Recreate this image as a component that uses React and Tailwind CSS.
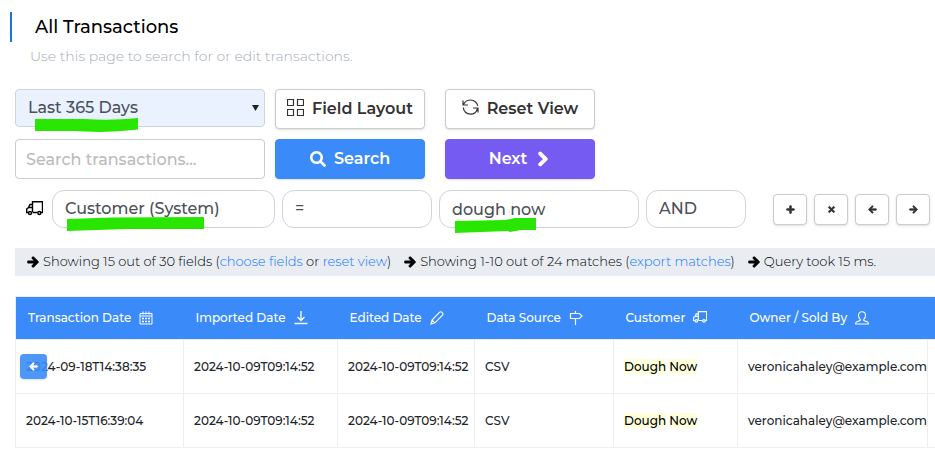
import React from "react";
import {
  FaSearch,
  FaChevronRight,
  FaPlus,
  FaTimes,
  FaArrowLeft,
  FaArrowRight,
} from "react-icons/fa";

function LineIcon({ className, box = 14, strokeWidth = 1, children }) {
  return (
    <svg
      className={`shrink-0 ${className}`}
      viewBox={`0 0 ${box} ${box}`}
      fill="none"
      stroke="currentColor"
      strokeWidth={strokeWidth}
      aria-hidden="true"
    >
      {children}
    </svg>
  );
}

function GridIcon({ className }) {
  return (
    <LineIcon className={className} box={17}>
      <path d="M.5.5h6v6h-6zM10.500.5h6v6h-6zM.5 10.500h6v6h-6zM10.500 10.500h6v6h-6z" strokeWidth="1.2" />
    </LineIcon>
  );
}

function ReloadIcon({ className }) {
  return (
    <LineIcon className={className} box={17} strokeWidth={1.2}>
      <path d="M1 1.500v4.500h5M1.500 5.500C3 2.500 5.500 1 8.500 1c3.800 0 6.800 2.700 7.300 6" />
      <path d="M11 9h5v4.500M15.500 9.500c-.8 3.300-3.500 5.700-7 5.700-4 0-7-3-7.200-6.700" />
    </LineIcon>
  );
}

function TruckIcon({ className }) {
  return (
    <LineIcon className={className} box={17} strokeWidth={1.4}>
      <path d="M11.500 11.500H6.500M15 11.500h1.500V.8H6.500v10.200M6.500 3.500H4L2.500 6.500.7 8v3.500h1.500M6.500 6.500h-4" />
      <circle cx="4" cy="12" r="1.500" />
      <circle cx="13.300" cy="12" r="1.500" />
    </LineIcon>
  );
}

function CalendarIcon({ className }) {
  return (
    <LineIcon className={className}>
      <path d="M1 2.500h12v10.500H1zM1 5h12M4 .5v3M7 .5v3M10 .5v3" />
      <path d="M3 7.500h2M6 7.500h2M9 7.500h2M3 10.500h2M6 10.500h2M9 10.500h2" strokeWidth="1.500" />
    </LineIcon>
  );
}

function DownloadIcon({ className }) {
  return (
    <LineIcon className={className} strokeWidth={1.3}>
      <path d="M7 0v9.500M3.500 6L7 9.500 10.500 6M.5 12.500h13" />
    </LineIcon>
  );
}

function PencilIcon({ className }) {
  return (
    <LineIcon className={className} strokeWidth={1.1}>
      <path d="M1 13l1-4 7.500-7.700c1.500-1.500 4.300.8 3 2.800L5 11.800zM2 9l3 2.800" />
    </LineIcon>
  );
}

function SignpostIcon({ className }) {
  return (
    <LineIcon className={className} strokeWidth={1.2}>
      <path d="M6.500 0v2.500M6.500 7.500V14M1.500 2.500h9L13 5l-2.500 2.500h-9z" />
    </LineIcon>
  );
}

function UserIcon({ className }) {
  return (
    <LineIcon className={className} strokeWidth={1.1}>
      <path d="M7 .8c2.200 0 3.500 1.500 3.500 3.700 0 1.700-.8 3-1.700 3.800v1.200l3.400 1.200c.8.300 1.200.9 1.200 2.300H.6c0-1.400.4-2 1.200-2.300l3.400-1.200V8.300C4.300 7.500 3.500 6.200 3.500 4.500 3.500 2.300 4.800.8 7 .8z" />
    </LineIcon>
  );
}

const COLUMNS = [
  { label: "Transaction Date", Icon: CalendarIcon, width: "w-[168px]" },
  { label: "Imported Date", Icon: DownloadIcon, width: "w-[154px]" },
  { label: "Edited Date", Icon: PencilIcon, width: "w-[137px]" },
  { label: "Data Source", Icon: SignpostIcon, width: "w-[139px]" },
  { label: "Customer", Icon: TruckIcon, width: "w-[124px]" },
  { label: "Owner / Sold By", Icon: UserIcon, width: "w-[190px]" },
];

const ROWS = [
  ["2024-09-18T14:38:35", "2024-10-09T09:14:52", "2024-10-09T09:14:52", "CSV", ["Dough", "Now"], "veronicahaley@example.com"],
  ["2024-10-15T16:39:04", "2024-10-09T09:14:52", "2024-10-09T09:14:52", "CSV", ["Dough", "Now"], "veronicahaley@example.com"],
];

const PILL =
  "block w-full h-[38px] appearance-none rounded-xl border border-[#ced4da] bg-white px-3 text-[16px] font-medium text-[#495057] outline-none";
const BUTTON =
  "flex h-10 w-[150px] items-center justify-center gap-2 rounded border text-[16px] font-semibold shadow-sm";
const HEAVY = "stroke-current [stroke-width:45]";

function Marker({ className, d, viewBox }) {
  return (
    <svg className={`pointer-events-none absolute ${className}`} viewBox={viewBox} aria-hidden="true">
      <path d={d} fill="#28e600" />
    </svg>
  );
}

function Toolbar() {
  return (
    <div className="mt-[23px] flex flex-col gap-[10px]">
      <div className="flex items-start">
        <div className="relative mr-[10px] w-[250px]">
          <select
            aria-label="Date range"
            className="block h-[38px] w-full appearance-none rounded border border-[#ced4da] bg-[#eaf2ff] px-3 text-[16px] font-medium text-[#495057] outline-none"
          >
            <option>Last 365 Days</option>
          </select>
          <svg className="pointer-events-none absolute top-4 right-[6px] h-[6px] w-[7px]" viewBox="0 0 7 6" aria-hidden="true">
            <path d="M0 0h7L3.5 6z" fill="#222" />
          </svg>
          <Marker
            className="top-[29px] left-5 h-[15px] w-[103px]"
            viewBox="0 0 103 15"
            d="M0 1H50Q76 3 103 0V11.500Q76 15 50 13.500L38 13H0Z"
          />
        </div>
        <button type="button" className={`${BUTTON} mr-5 border-[#ccc] bg-white text-[#333]`}>
          <GridIcon className="mb-[3px] size-[17px]" />
          Field Layout
        </button>
        <button type="button" className={`${BUTTON} border-[#ccc] bg-white text-[#333]`}>
          <ReloadIcon className="mb-[3px] size-[17px]" />
          Reset View
        </button>
      </div>
      <div className="flex items-start">
        <input
          type="text"
          aria-label="Search transactions"
          placeholder="Search transactions..."
          className="mr-[10px] block h-10 w-[250px] rounded border border-[#ccc] bg-white px-[10px] text-[16px] font-medium text-[#495057] outline-none placeholder:text-[#bbb]"
        />
        <button type="button" className={`${BUTTON} mr-5 border-[#3a8bf9] bg-[#3a8bf9] text-white`}>
          <FaSearch className="size-4" />
          Search
        </button>
        <button type="button" className={`${BUTTON} border-[#755bf2] bg-[#755bf2] text-white`}>
          Next
          <FaChevronRight className={`size-4 ${HEAVY}`} />
        </button>
      </div>
    </div>
  );
}

const ACTIONS = [
  { label: "Add condition", Icon: FaPlus },
  { label: "Remove condition", Icon: FaTimes },
  { label: "Move left", Icon: FaArrowLeft },
  { label: "Move right", Icon: FaArrowRight },
];

function Filter() {
  return (
    <div className="mt-[11px] flex items-center">
      <TruckIcon className="mr-[9px] ml-[11px] size-[17px] text-black" />
      <div className="relative mr-[7px] w-[223px] shrink-0">
        <select aria-label="Filter field" className={PILL}>
          <option>Customer (System)</option>
        </select>
        <Marker
          className="top-[27px] left-[15px] h-[14px] w-[137px]"
          viewBox="0 0 137 14"
          d="M0 2L45 .5L137 0V12H60L0 14Z"
        />
      </div>
      <select aria-label="Operator" className={`${PILL} mr-[7px] max-w-[150px] shrink-0`}>
        <option>=</option>
      </select>
      <div className="relative mr-[7px] w-[200px] shrink-0">
        <input type="text" aria-label="Filter value" defaultValue="dough now" className={PILL} />
        <Marker
          className="top-[28px] left-4 h-[15px] w-[81px]"
          viewBox="0 0 81 15"
          d="M0 3L50 2L60 0H81V12H66L55 14L53 13L0 15Z"
        />
      </div>
      <select aria-label="Connector" className={`${PILL} mr-[27px] max-w-[100px] shrink-0`}>
        <option>AND</option>
      </select>
      <div className="flex shrink-0 gap-[7px]">
        {ACTIONS.map(({ label, Icon }) => (
          <button
            key={label}
            type="button"
            aria-label={label}
            className="flex h-[31px] w-[34px] items-center justify-center rounded border border-[#ccc] bg-white text-[#333] shadow-sm"
          >
            <Icon className={`size-[9px] ${HEAVY}`} />
          </button>
        ))}
      </div>
    </div>
  );
}

function Note({ children }) {
  return (
    <p className="flex items-center gap-1">
      <FaArrowRight className={`size-3 text-black ${HEAVY}`} />
      <span>{children}</span>
    </p>
  );
}

function Summary() {
  return (
    <div className="mt-5 flex h-7 items-center gap-[13px] bg-[#e9ecf1] px-3 text-[13px] font-light whitespace-nowrap text-black">
      <Note>
        Showing 15 out of 30 fields (<a href="#fields" className="text-[#0a78ff]">choose fields</a> or{" "}
        <a href="#reset" className="text-[#0a78ff]">reset view</a>)
      </Note>
      <Note>
        Showing 1-10 out of 24 matches (<a href="#export" className="text-[#0a78ff]">export matches</a>)
      </Note>
      <Note>Query took 15 ms.</Note>
    </div>
  );
}

function Cell({ value }) {
  if (!Array.isArray(value)) return value;
  return value.map((word, i) => (
    <React.Fragment key={word}>
      {i > 0 && " "}
      <mark className="bg-[#ffffdb] text-black">{word}</mark>
    </React.Fragment>
  ));
}

function Results() {
  return (
    <div className="relative mt-5">
      <table className="w-full table-fixed border-collapse text-left text-[12px] font-medium whitespace-nowrap">
        <thead>
          <tr className="h-[43px] border-t border-l border-[#eee] bg-[#3a8bf9] text-white">
            {COLUMNS.map(({ label, Icon, width }) => (
              <th key={label} scope="col" className={`${width} px-3 font-medium`}>
                <span className="flex items-center gap-2">
                  {label}
                  <Icon className="size-[14px]" />
                </span>
              </th>
            ))}
            <td />
          </tr>
        </thead>
        <tbody>
          {ROWS.map((row, r) => (
            <tr key={r} className="h-[54px] text-[#212529]">
              {row.map((value, c) => (
                <td key={c} className="border border-[#eee] px-[10px]">
                  <Cell value={value} />
                </td>
              ))}
              <td className="border-y border-[#eee]" />
            </tr>
          ))}
        </tbody>
      </table>
      <button
        type="button"
        aria-label="Scroll left"
        className="absolute top-[58px] left-[5px] flex h-[25px] w-[27px] items-center justify-center rounded bg-[#3a8bf9]/90 text-white shadow-sm"
      >
        <FaArrowLeft className={`size-[9px] ${HEAVY}`} />
      </button>
    </div>
  );
}

export default function App() {
  return (
    <main className="overflow-hidden bg-white pt-3 pl-[15px] font-['Montserrat','Inter',sans-serif]">
      <header>
        <h1 className="-ml-[5px] flex h-[30px] items-center border-l-2 border-[#1976d2] pl-[23px] text-[18px] font-medium text-black">
          All Transactions
        </h1>
        <p className="mt-1 pl-[15px] text-[14px] leading-5 font-light text-[#a5acb5]">
          Use this page to search for or edit transactions.
        </p>
      </header>
      <Toolbar />
      <Filter />
      <Summary />
      <Results />
    </main>
  );
}
